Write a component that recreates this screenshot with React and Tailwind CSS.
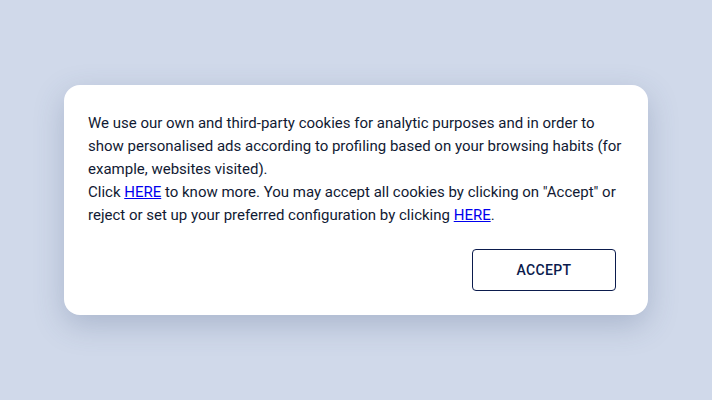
export default function App() {
  return (
    <div className="w-full h-screen bg-[#d0d9ea] flex items-center justify-center font-['Roboto',sans-serif]">
      <div className="w-[584px] bg-white rounded-2xl shadow-[0_10px_30px_rgba(60,80,120,0.25)] pt-[27px] pb-6 pl-6 pr-5">
        <p className="text-[15px] leading-[23px] text-[#111a33]">
          We use our own and third-party cookies for analytic purposes and in order to show personalised ads according to profiling based on your browsing habits (for example, websites visited).
          <br />
          Click <a href="#" className="text-[#0000ee] underline">HERE</a> to know more. You may accept all cookies by clicking on "Accept" or reject or set up your preferred configuration by clicking <a href="#" className="text-[#0000ee] underline">HERE</a>.
        </p>
        <div className="flex justify-end mt-[22px] pr-3">
          <button className="w-36 h-[42px] border border-[#0b1b4d] rounded text-[#0b1b4d] text-sm font-medium tracking-wide">
            ACCEPT
          </button>
        </div>
      </div>
    </div>
  );
}
